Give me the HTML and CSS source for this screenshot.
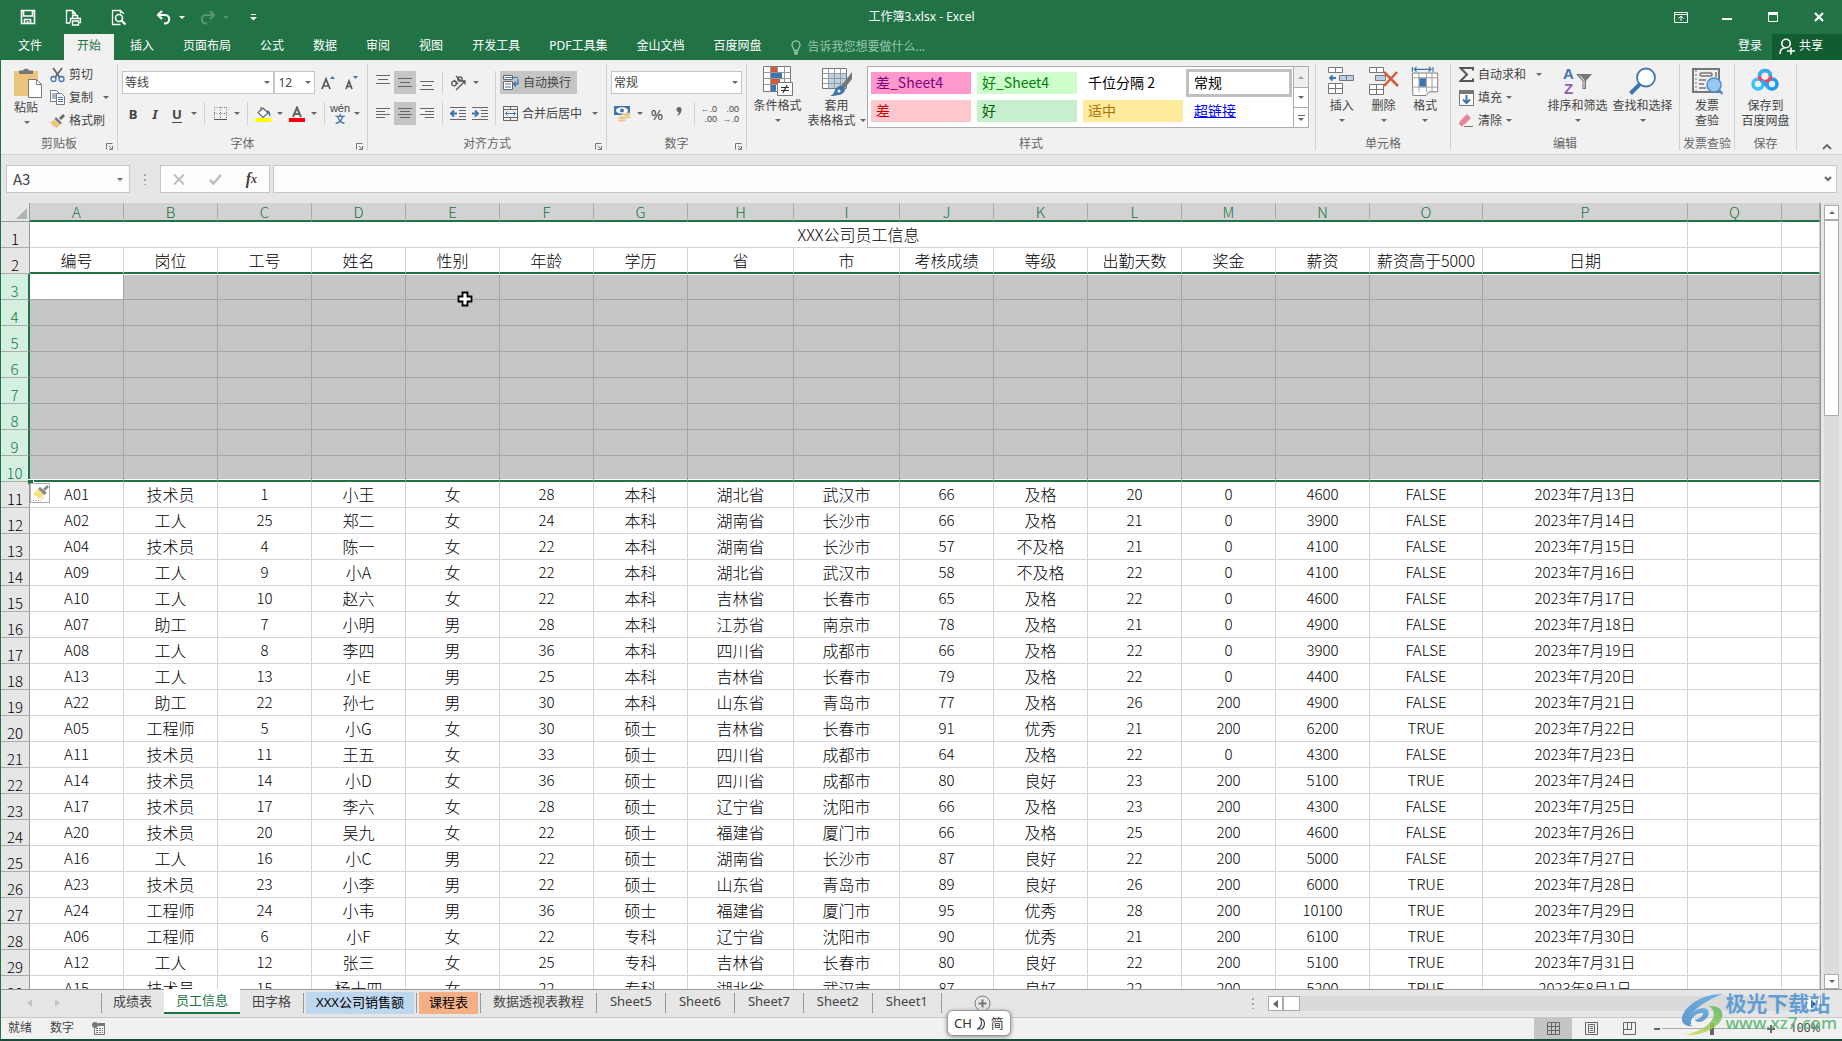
FILE: index.html
```html
<!DOCTYPE html>
<html lang="zh-CN">
<head>
<meta charset="utf-8">
<title>工作簿3.xlsx - Excel</title>
<link rel="stylesheet" href="styles.css">
</head>
<body>
<header class="top">
  <div class="titlebar">
    <div class="quick">
      <button class="q" aria-label="保存"><svg width="16" height="16" viewBox="0 0 16 16"><path d="M1.5 1.5h13v13h-13zM3.500 1.500v5.500h9v-5.500M4.500 14.500v-4h6v4M7.500 12v2.500" fill="none" stroke="#fff" stroke-width="1.600"/></svg></button>
      <button class="q" aria-label="快速打印"><svg width="17" height="17" viewBox="0 0 17 17" fill="none" stroke="#fff" stroke-width="1.300"><path d="M5 14H1.500V1.500h6l3 3V6M7.500 1.500v3h3M7.500 9.500V6.500h5v3M5.500 13.500v-4h10v4h-2M7.500 12h6v4h-6z"/></svg></button>
      <button class="q" aria-label="打印预览"><svg width="16" height="17" viewBox="0 0 16 17" fill="none" stroke="#fff"><path d="M12.500 5v-.5l-3-3h-8v14h8M9.500 1.500v3" stroke-width="1.300"/><circle cx="8" cy="9" r="3.500" stroke-width="1.600"/><path d="M10.500 11.500l4 4" stroke-width="2.200"/></svg></button>
      <button class="q" aria-label="撤消"><svg width="16" height="15" viewBox="0 0 16 15" fill="none" stroke="#fff" stroke-width="2.200"><path d="M6 1L2 5l4 4M2 5h7a4 4 0 0 1 0 8.500H8"/></svg><i class="caret"></i></button>
      <button class="q dim" aria-label="恢复"><svg width="16" height="15" viewBox="0 0 16 15" fill="none" stroke="#fff" stroke-width="2.200"><path d="M10 1l4 4-4 4M14 5H6a4 4 0 0 0 0 8.500h1"/></svg><i class="caret"></i></button>
      <button class="q" aria-label="自定义快速访问工具栏"><svg width="7" height="7" viewBox="0 0 7 7"><path d="M1 .5h5" stroke="#fff"/><path d="M0 3h7L3.500 6.500z" fill="#fff"/></svg></button>
    </div>
    <h1>工作簿3.xlsx - Excel</h1>
    <div class="winbtns">
      <button aria-label="功能区显示选项"><svg width="14" height="11" viewBox="0 0 14 11" fill="none" stroke="#fff"><path d="M.5.5h13v10H.5zM.5 2.500h13M7 9V4.500M4.500 6.500L7 4l2.500 2.500"/></svg></button>
      <button aria-label="最小化"><svg width="10" height="10" viewBox="0 0 10 10"><path d="M0 7h10" stroke="#fff" stroke-width="2"/></svg></button>
      <button aria-label="最大化"><svg width="10" height="10" viewBox="0 0 10 10"><path d="M.5.5h9v9h-9z" fill="none" stroke="#fff"/><path d="M0 1.500h10" stroke="#fff" stroke-width="3"/></svg></button>
      <button aria-label="关闭"><svg width="10" height="10" viewBox="0 0 10 10"><path d="M1 1l8 8M9 1L1 9" stroke="#fff" stroke-width="2.200"/></svg></button>
    </div>
  </div>
  <nav class="tabs">
    <button class="file">文件</button><button class="on">开始</button><button>插入</button><button>页面布局</button><button>公式</button><button>数据</button><button>审阅</button><button>视图</button><button>开发工具</button><button>PDF工具集</button><button>金山文档</button><button>百度网盘</button>
    <button class="tell"><svg width="10" height="15" viewBox="0 0 10 15" fill="none" stroke="#9ac5ac" stroke-width="1.300"><path d="M3 10.500C3 8 1 7.500 1 4.800a4 4 0 0 1 8 0C9 7.500 7 8 7 10.500zM3 12.500h4M3.500 14h3"/></svg>告诉我您想要做什么...</button>
    <span class="grow"></span>
    <button class="login">登录</button>
    <button class="share"><svg width="16" height="17" viewBox="0 0 16 17" fill="none" stroke="#fff" stroke-width="1.600"><circle cx="7" cy="5.500" r="4.200"/><path d="M1 16c0-4 2-6 5-6.300M8 13h8M12 9.500v7"/></svg>共享</button>
  </nav>
</header>

<section class="ribbon">
  <div class="group g-clip">
    <div class="body tight">
      <button class="big paste"><svg width="28" height="30" viewBox="0 0 28 30"><path d="M0 3h24v25H0z" fill="#ecc67d"/><path d="M5 6V2.500h4C9 0 15 0 15 2.500h4V6z" fill="#777"/><path d="M14.500 11.500h8l5 5v13h-13z" fill="#fff" stroke="#777"/><path d="M22.500 11.500v5h5" fill="none" stroke="#777"/></svg><span>粘贴</span><i class="caret"></i></button>
      <div class="stack">
        <button class="sm"><svg width="15" height="16" viewBox="0 0 15 16" fill="none"><path d="M3 1l6.500 9M12 1L5.500 10" stroke="#666" stroke-width="1.800"/><circle cx="3.500" cy="12" r="2.500" stroke="#3e75b0" stroke-width="1.300"/><circle cx="11.500" cy="12" r="2.500" stroke="#3e75b0" stroke-width="1.300"/></svg>剪切</button>
        <button class="sm"><svg width="15" height="15" viewBox="0 0 15 15"><path d="M.5.5h6l2 2v9h-8z" fill="#fff" stroke="#777"/><path d="M2 4h4M2 6h4M2 8h4" stroke="#3e75b0"/><path d="M6.500 3.500h5l3 3v8h-8z" fill="#fff" stroke="#777"/><path d="M8 7.500h5M8 9.500h5M8 11.500h5" stroke="#3e75b0"/></svg>复制<i class="caret far"></i></button>
        <button class="sm"><svg width="15" height="14" viewBox="0 0 15 14"><path d="M9 4l4-4 2 2-4 4z" fill="#666"/><path d="M6 3l6 6-2 1.500L4.500 5z" fill="#777"/><path d="M4 5.500l6 5.500-3 3C4 13 2 11 0 8c2 0 3-1 4-2.500z" fill="#ecc67d"/></svg>格式刷</button>
      </div>
    </div>
    <div class="label">剪贴板<svg class="launch" width="7" height="7" viewBox="0 0 7 7"><path d="M.5 6.500v-6h6M3 3l3 3M6.500 3v3.500H3" fill="none" stroke="#777"/></svg></div>
  </div>

  <div class="group g-font">
    <div class="body rows">
      <div class="row">
        <span class="combo w-font"><select aria-label="字体"><option>等线</option></select></span><span class="combo w-size"><select aria-label="字号"><option>12</option></select></span>
        <button class="ic" aria-label="增大字号"><svg width="14" height="16" viewBox="0 0 14 16"><path d="M1 14L5 4l4 10M2.500 11h5" fill="none" stroke="#555" stroke-width="1.700"/><path d="M9 4l2.500-3L14 4z" fill="#3e75b0"/></svg></button><button class="ic" aria-label="减小字号"><svg width="14" height="16" viewBox="0 0 14 16"><path d="M1 14l3-8 3 8M2.500 11.500h3.500" fill="none" stroke="#555" stroke-width="1.600"/><path d="M8 1h5l-2.500 3z" fill="#3e75b0"/></svg></button>
      </div>
      <div class="row">
        <button class="ic fmt b">B</button><button class="ic fmt i">I</button><button class="ic fmt u">U</button><i class="dd"></i><i class="sep"></i>
        <button class="ic" aria-label="边框"><svg width="13" height="13" viewBox="0 0 13 13" fill="none" stroke="#777"><path d="M.5 0v12M6.500 0v12M12.500 0v12M0 .5h13M0 6.500h13" stroke-dasharray="1 1.500"/><path d="M0 12.500h13" stroke="#555"/></svg></button><i class="dd"></i><i class="sep"></i>
        <button class="ic" aria-label="填充颜色"><svg width="16" height="16" viewBox="0 0 16 16"><path d="M8 2l5 5-5 4.500L3 6.500zM6 5V1" fill="#fff" stroke="#666" stroke-width="1.200"/><path d="M12 4c3 1 4 4 3 7-1-2-1-3-3-4z" fill="#3e75b0"/><path d="M0 12h16v4H0z" fill="#ff0"/></svg></button><i class="dd"></i>
        <button class="ic" aria-label="字体颜色"><svg width="16" height="16" viewBox="0 0 16 16"><path d="M4 11L8 1.500 12 11M5.500 8h5" fill="none" stroke="#666" stroke-width="2"/><path d="M0 12h16v4H0z" fill="red"/></svg></button><i class="dd"></i><i class="sep"></i>
        <button class="ic wen"><span>wén</span><b>文</b></button><i class="dd"></i>
      </div>
    </div>
    <div class="label">字体<svg class="launch" width="7" height="7" viewBox="0 0 7 7"><path d="M.5 6.500v-6h6M3 3l3 3M6.500 3v3.500H3" fill="none" stroke="#777"/></svg></div>
  </div>

  <div class="group g-align">
    <div class="body cols">
      <div class="rows">
        <div class="row">
          <button class="ic" aria-label="顶端对齐"><svg width="14" height="15" viewBox="0 0 14 15" stroke="#666"><path d="M0 .5h14M2 4.500h10M0 8.500h14"/></svg></button><button class="ic on" aria-label="垂直居中"><svg width="14" height="15" viewBox="0 0 14 15" stroke="#666"><path d="M0 3.500h14M2 7.500h10M0 11.500h14"/></svg></button><button class="ic" aria-label="底端对齐"><svg width="14" height="15" viewBox="0 0 14 15" stroke="#666"><path d="M0 6.500h14M2 10.500h10M0 14.500h14"/></svg></button><i class="sep"></i>
          <button class="ic" aria-label="方向"><svg width="17" height="16" viewBox="0 0 17 16" fill="none" stroke="#555" stroke-width="1.300"><circle cx="4" cy="8.500" r="2.300"/><path d="M4 5l4 4M6 1l5 5"/><circle cx="10" cy="4" r="2.200"/><path d="M6 15L15 6M11.500 6H15v3.500"/></svg></button><i class="dd"></i>
        </div>
        <div class="row">
          <button class="ic" aria-label="左对齐"><svg width="14" height="11" viewBox="0 0 14 11" stroke="#666"><path d="M0 .5h14M0 3.500h9M0 6.500h14M0 9.500h9"/></svg></button><button class="ic on" aria-label="居中"><svg width="14" height="11" viewBox="0 0 14 11" stroke="#666"><path d="M0 .5h14M2 3.500h10M0 6.500h14M2 9.500h10"/></svg></button><button class="ic" aria-label="右对齐"><svg width="14" height="11" viewBox="0 0 14 11" stroke="#666"><path d="M0 .5h14M5 3.500h9M0 6.500h14M5 9.500h9"/></svg></button><i class="sep"></i>
          <button class="ic" aria-label="减少缩进"><svg width="16" height="13" viewBox="0 0 16 13"><path d="M0 .5h16M9 3.500h7M9 6.500h7M9 9.500h7M0 12.500h16" stroke="#666"/><path d="M7 6.500H1M4 3.500l-3 3 3 3" fill="none" stroke="#3e75b0" stroke-width="2"/></svg></button><button class="ic" aria-label="增加缩进"><svg width="16" height="13" viewBox="0 0 16 13"><path d="M0 .5h16M9 3.500h7M9 6.500h7M9 9.500h7M0 12.500h16" stroke="#666"/><path d="M0 6.500h6M3 3.500l3 3-3 3" fill="none" stroke="#3e75b0" stroke-width="2"/></svg></button>
        </div>
      </div>
      <i class="sep tall"></i>
      <div class="rows">
        <button class="txt on"><svg width="16" height="15" viewBox="0 0 16 15" fill="none"><path d="M.5.500h9v4h-9zM.5 6.500h9v8h-9z" fill="#fff" stroke="#666"/><path d="M2 2.500h13M2 9h6M2 12h6" stroke="#3e75b0"/><path d="M15 4v5h-4M13 6.500L10.500 9l2.500 2.500" stroke="#3e75b0" stroke-width="1.300"/></svg>自动换行</button>
        <button class="txt"><svg width="15" height="15" viewBox="0 0 15 15" fill="none"><path d="M.5.500h14v14H.5zM.5 3.500h14M.5 11.500h14M7.500.5v3M7.500 11.500v3" stroke="#666"/><path d="M2 7.500h11M4.500 5.500l-2 2 2 2M10.500 5.500l2 2-2 2" stroke="#3e75b0"/></svg>合并后居中<i class="caret"></i></button>
      </div>
    </div>
    <div class="label">对齐方式<svg class="launch" width="7" height="7" viewBox="0 0 7 7"><path d="M.5 6.500v-6h6M3 3l3 3M6.500 3v3.500H3" fill="none" stroke="#777"/></svg></div>
  </div>

  <div class="group g-num">
    <div class="body rows">
      <div class="row"><span class="combo w-num"><select aria-label="数字格式"><option>常规</option></select></span></div>
      <div class="row">
        <button class="ic" aria-label="会计数字格式"><svg width="17" height="16" viewBox="0 0 17 16"><path d="M0 0h16v9H0z" fill="#3e75b0"/><ellipse cx="8" cy="4.500" rx="6" ry="3.200" fill="#fff"/><circle cx="8" cy="4.500" r="2" fill="#3e75b0"/><g fill="#ecc67d" stroke="#f0f0f0" stroke-width=".6"><ellipse cx="12.500" cy="11" rx="4" ry="1.800"/><ellipse cx="12.500" cy="8.500" rx="4" ry="1.800"/><ellipse cx="8" cy="14" rx="4" ry="1.800"/><ellipse cx="8" cy="12" rx="4" ry="1.800"/></g></svg></button><i class="dd"></i>
        <button class="ic pct">%</button><button class="ic comma" aria-label="千位分隔样式"><svg width="6" height="9" viewBox="0 0 6 9"><path d="M3 0a2.500 2.500 0 0 1 2.500 2.700C5.500 5.500 4 8 1 8.800c1.200-1.500 1.700-2.500 1.800-3.800A2.500 2.500 0 1 1 3 0z" fill="#666"/></svg></button><i class="sep"></i>
        <button class="ic dec"><span><b>←</b>.0</span><span>.00</span></button><button class="ic dec"><span>.00</span><span><b>→</b>.0</span></button>
      </div>
    </div>
    <div class="label">数字<svg class="launch" width="7" height="7" viewBox="0 0 7 7"><path d="M.5 6.500v-6h6M3 3l3 3M6.500 3v3.500H3" fill="none" stroke="#777"/></svg></div>
  </div>

  <div class="group g-style">
    <div class="body">
      <button class="big w-style"><svg width="30" height="30" viewBox="0 0 30 30"><path d="M.5.500h27v25H.5z" fill="#fff" stroke="#777"/><path d="M.5 6.500h27M.5 12.500h27M.5 18.500h27M7.500.5v25M14.500.5v25M21.500.5v25" stroke="#999"/><path d="M8 1h6v5H8zM8 13h9v5H8z" fill="#d6593a"/><path d="M8 7h11v5H8zM8 19h5v6H8z" fill="#3e75b0"/><path d="M14.500 16.500h15v13h-15z" fill="#fff" stroke="#777"/><path d="M18 21.500h8M18 24.500h8M24 19l-4 8" stroke="#333" stroke-width="1.200"/></svg><span>条件格式</span><i class="caret"></i></button>
      <button class="big w-style"><svg width="30" height="30" viewBox="0 0 30 30"><path d="M.5 2.500h24v20H.5z" fill="#fff" stroke="#777"/><path d="M7 8h17v14H7z" fill="#bcd0e6"/><path d="M.5 7.500h24M.5 12.500h24M.5 17.500h24M6.500 2.500v20M12.500 2.500v20M18.500 2.500v20" stroke="#999"/><path d="M30 6L19 20l3 3 8-10z" fill="#777"/><path d="M20 20l3 3c0 5-6 7-15 7 3-1 4-3 5-6 1-3 5-5 7-4z" fill="#3e75b0"/><circle cx="17" cy="25" r="1.500" fill="#fff"/></svg><span>套用</span><span class="two">表格格式<i class="caret"></i></span></button>
      <div class="gallery">
        <div class="swatches">
          <button class="s1">差_Sheet4</button><button class="s2">好_Sheet4</button><button>千位分隔 2</button><button class="s4">常规</button>
          <button class="s5">差</button><button class="s6">好</button><button class="s7">适中</button><button class="s8">超链接</button>
        </div>
        <div class="galbtns"><button class="off" aria-label="上一行"><i class="caret up"></i></button><button aria-label="下一行"><i class="caret"></i></button><button class="more" aria-label="其他"><i class="caret"></i></button></div>
      </div>
    </div>
    <div class="label">样式</div>
  </div>

  <div class="group g-cell">
    <div class="body">
      <button class="big w-cell"><svg width="27" height="30" viewBox="0 0 27 30"><path d="M.5 1.500h14v5H.5zM7.500 1.500v5M.5 17.500h14v10H.5zM.5 22.500h14M7.500 17.500v10" fill="#fff" stroke="#777"/><path d="M11.500 9.500h14v5h-14zM18.500 9.500v5" fill="#bcd0e6" stroke="#777"/><path d="M8 12H2M4.500 9.500L2 12l2.500 2.500" fill="none" stroke="#3e75b0" stroke-width="1.800"/></svg><span>插入</span><i class="caret"></i></button>
      <button class="big w-cell"><svg width="30" height="30" viewBox="0 0 30 30"><path d="M.5 1.500h14v5H.5zM7.500 1.500v5M.5 18.500h14v10H.5zM.5 23.500h14M7.500 18.500v10" fill="#fff" stroke="#777"/><path d="M6.500 9.500h10v5h-10z" fill="#bcd0e6" stroke="#777"/><path d="M15 6l14 14M28 6L15 20" stroke="#d6593a" stroke-width="2.500"/></svg><span>删除</span><i class="caret"></i></button>
      <button class="big w-cell"><svg width="28" height="32" viewBox="0 0 28 32"><path d="M.5 1v5M22.500 1v5M2 3.500h19M5 1L2.500 3.500 5 6M18 1l2.500 2.500L18 6" fill="none" stroke="#3e75b0" stroke-width="1.300"/><path d="M.5 7.500h27v20H18l-3 4H1z" fill="#fff" stroke="#777"/><path d="M.5 12.500h27M.5 22.500h27M7.500 7.500v20M15.500 7.500v20M21.500 7.500v20" stroke="#999"/><path d="M8 13h7v9H8z" fill="#3e75b0"/></svg><span>格式</span><i class="caret"></i></button>
    </div>
    <div class="label">单元格</div>
  </div>

  <div class="group g-edit">
    <div class="body tight">
      <div class="stack">
        <button class="sm"><svg width="15" height="15" viewBox="0 0 15 15"><path d="M14 3.500V1H1.500L8 7.500 1.500 14H14v-2.500" fill="none" stroke="#555" stroke-width="2"/></svg>自动求和<i class="caret far"></i></button>
        <button class="sm"><svg width="15" height="16" viewBox="0 0 15 16"><path d="M.5.500h14v15H.5z" fill="#fff" stroke="#777"/><path d="M0 0h15v4H0z" fill="#777"/><path d="M7.500 5v8M4 9.500l3.500 3.500L11 9.500" fill="none" stroke="#3e75b0" stroke-width="2"/></svg>填充<i class="caret"></i></button>
        <button class="sm"><svg width="15" height="14" viewBox="0 0 15 14"><path d="M8 0l4 4-7 7-4-4z" fill="#e8849a"/><path d="M1 7.500l3.500 3.500L3 12.500 0 9.500z" fill="#d96a80"/><path d="M5 12.500h9" stroke="#777"/></svg>清除<i class="caret"></i></button>
      </div>
      <button class="big w-edit"><span class="az"><b>A</b><b>Z</b><svg width="18" height="17" viewBox="0 0 18 17"><path d="M1 1h16l-6 7v8H7.500V8z" fill="#777"/><path d="M5 2.500l4 5V15" fill="none" stroke="#f0f0f0"/></svg></span><span>排序和筛选</span><i class="caret"></i></button>
      <button class="big w-edit"><svg width="28" height="28" viewBox="0 0 28 28"><path d="M1.500 26.500L11 17" stroke="#3e75b0" stroke-width="4"/><circle cx="17" cy="10.500" r="9" fill="#fff" stroke="#3e75b0" stroke-width="1.800"/></svg><span>查找和选择</span><i class="caret"></i></button>
    </div>
    <div class="label">编辑</div>
  </div>

  <div class="group g-inv">
    <div class="body">
      <button class="big"><svg width="31" height="28" viewBox="0 0 31 28"><path d="M1 2h26v23H1z" fill="#eee" stroke="#777" stroke-width="2"/><path d="M4 3v21" stroke="#777" stroke-dasharray="2 2"/><rect x="8" y="6" width="12" height="3" rx="1.500" fill="none" stroke="#777" stroke-width="1.500"/><path d="M7 13h7M7 17h5M7 21h7M24 5v5" stroke="#777" stroke-width="1.500"/><circle cx="22" cy="18" r="7" fill="#99c8f2" stroke="#4a8fd0" stroke-width="1.500"/><path d="M27 23l3.500 4" stroke="#4a8fd0" stroke-width="2.500"/></svg><span>发票</span><span>查验</span></button>
    </div>
    <div class="label">发票查验</div>
  </div>
  <div class="group g-save">
    <div class="body">
      <button class="big"><svg width="28" height="28" viewBox="0 0 28 28" fill="none" stroke-width="3.500"><circle cx="7" cy="17" r="5" stroke="#3cc0f5"/><circle cx="21" cy="17" r="5" stroke="#1e9bf5"/><circle cx="14" cy="9" r="5.500" stroke="#ee4a68"/><path d="M8.500 9a5.500 5.500 0 0 1 11 0" stroke="#2bb4f4"/><path d="M10.500 13.500L17.500 20.500" stroke="#2ba9f2"/></svg><span>保存到</span><span>百度网盘</span></button>
    </div>
    <div class="label">保存</div>
  </div>
  <button class="collapse" aria-label="折叠功能区"><svg width="10" height="7" viewBox="0 0 10 7"><path d="M1 6l4-4 4 4" fill="none" stroke="#666" stroke-width="1.800"/></svg></button>
</section>

<section class="fbar">
  <div class="namebox"><input aria-label="名称框" value="A3"><i class="caret"></i></div>
  <i class="dots"></i>
  <div class="fbtns">
    <button aria-label="取消"><svg width="12" height="11" viewBox="0 0 12 11"><path d="M1 .5l10 10M11 .5l-10 10" stroke="#bbb" stroke-width="1.800"/></svg></button>
    <button aria-label="输入"><svg width="13" height="11" viewBox="0 0 13 11"><path d="M1 6l3.500 3.500L12 1" fill="none" stroke="#bbb" stroke-width="2.500"/></svg></button>
    <button class="fx">f<small>x</small></button>
  </div>
  <div class="formula"><input aria-label="编辑栏"><svg width="8" height="6" viewBox="0 0 8 6"><path d="M1 1l3 3 3-3" fill="none" stroke="#666" stroke-width="2"/></svg></div>
</section>

<main class="sheet">
  <div class="view">
    <table class="grid">
      <colgroup><col class="c-head"><col class="c"><col class="c"><col class="c"><col class="c"><col class="c"><col class="c"><col class="c"><col class="c-hi"><col class="c-hi"><col class="c"><col class="c"><col class="c"><col class="c"><col class="c"><col class="c-o"><col class="c-p"><col class="c"><col></colgroup>
      <thead><tr><th class="corner"><svg width="11" height="11" viewBox="0 0 11 11"><path d="M11 0v11H0z" fill="#b4b4b4"/></svg><th>A<th>B<th>C<th>D<th>E<th>F<th>G<th>H<th>I<th>J<th>K<th>L<th>M<th>N<th>O<th>P<th>Q<th></tr></thead>
      <tbody>
      <tr class="head"><th>1<td colspan="16">XXX公司员工信息<td><td></tr>
      <tr class="head last"><th>2<td>编号<td>岗位<td>工号<td>姓名<td>性别<td>年龄<td>学历<td>省<td>市<td>考核成绩<td>等级<td>出勤天数<td>奖金<td>薪资<td>薪资高于5000<td>日期<td><td></tr>
      <tr class="sel first"><th>3<td class="active"><td><td><td><td><td> <td><td><td><td><td><td> <td><td><td><td><td><td></tr>
      <tr class="sel"><th>4<td><td><td><td><td><td> <td><td><td><td><td><td> <td><td><td><td><td><td></tr>
      <tr class="sel"><th>5<td><td><td><td><td><td> <td><td><td><td><td><td> <td><td><td><td><td><td></tr>
      <tr class="sel"><th>6<td><td><td><td><td><td> <td><td><td><td><td><td> <td><td><td><td><td><td></tr>
      <tr class="sel"><th>7<td><td><td><td><td><td> <td><td><td><td><td><td> <td><td><td><td><td><td></tr>
      <tr class="sel"><th>8<td><td><td><td><td><td> <td><td><td><td><td><td> <td><td><td><td><td><td></tr>
      <tr class="sel"><th>9<td><td><td><td><td><td> <td><td><td><td><td><td> <td><td><td><td><td><td></tr>
      <tr class="sel end"><th>10<td><td><td><td><td><td> <td><td><td><td><td><td> <td><td><td><td><td><td></tr>
      <tr><th>11<td>A01<td>技术员<td>1<td>小王<td>女<td>28<td>本科<td>湖北省<td>武汉市<td>66<td>及格<td>20<td>0<td>4600<td>FALSE<td>2023年7月13日<td><td></tr>
      <tr><th>12<td>A02<td>工人<td>25<td>郑二<td>女<td>24<td>本科<td>湖南省<td>长沙市<td>66<td>及格<td>21<td>0<td>3900<td>FALSE<td>2023年7月14日<td><td></tr>
      <tr><th>13<td>A04<td>技术员<td>4<td>陈一<td>女<td>22<td>本科<td>湖南省<td>长沙市<td>57<td>不及格<td>21<td>0<td>4100<td>FALSE<td>2023年7月15日<td><td></tr>
      <tr><th>14<td>A09<td>工人<td>9<td>小A<td>女<td>22<td>本科<td>湖北省<td>武汉市<td>58<td>不及格<td>22<td>0<td>4100<td>FALSE<td>2023年7月16日<td><td></tr>
      <tr><th>15<td>A10<td>工人<td>10<td>赵六<td>女<td>22<td>本科<td>吉林省<td>长春市<td>65<td>及格<td>22<td>0<td>4600<td>FALSE<td>2023年7月17日<td><td></tr>
      <tr><th>16<td>A07<td>助工<td>7<td>小明<td>男<td>28<td>本科<td>江苏省<td>南京市<td>78<td>及格<td>21<td>0<td>4900<td>FALSE<td>2023年7月18日<td><td></tr>
      <tr><th>17<td>A08<td>工人<td>8<td>李四<td>男<td>36<td>本科<td>四川省<td>成都市<td>66<td>及格<td>22<td>0<td>3900<td>FALSE<td>2023年7月19日<td><td></tr>
      <tr><th>18<td>A13<td>工人<td>13<td>小E<td>男<td>25<td>本科<td>吉林省<td>长春市<td>79<td>及格<td>22<td>0<td>4400<td>FALSE<td>2023年7月20日<td><td></tr>
      <tr><th>19<td>A22<td>助工<td>22<td>孙七<td>男<td>30<td>本科<td>山东省<td>青岛市<td>77<td>及格<td>26<td>200<td>4900<td>FALSE<td>2023年7月21日<td><td></tr>
      <tr><th>20<td>A05<td>工程师<td>5<td>小G<td>女<td>30<td>硕士<td>吉林省<td>长春市<td>91<td>优秀<td>21<td>200<td>6200<td>TRUE<td>2023年7月22日<td><td></tr>
      <tr><th>21<td>A11<td>技术员<td>11<td>王五<td>女<td>33<td>硕士<td>四川省<td>成都市<td>64<td>及格<td>22<td>0<td>4300<td>FALSE<td>2023年7月23日<td><td></tr>
      <tr><th>22<td>A14<td>技术员<td>14<td>小D<td>女<td>36<td>硕士<td>四川省<td>成都市<td>80<td>良好<td>23<td>200<td>5100<td>TRUE<td>2023年7月24日<td><td></tr>
      <tr><th>23<td>A17<td>技术员<td>17<td>李六<td>女<td>28<td>硕士<td>辽宁省<td>沈阳市<td>66<td>及格<td>23<td>200<td>4300<td>FALSE<td>2023年7月25日<td><td></tr>
      <tr><th>24<td>A20<td>技术员<td>20<td>吴九<td>女<td>22<td>硕士<td>福建省<td>厦门市<td>66<td>及格<td>25<td>200<td>4600<td>FALSE<td>2023年7月26日<td><td></tr>
      <tr><th>25<td>A16<td>工人<td>16<td>小C<td>男<td>22<td>硕士<td>湖南省<td>长沙市<td>87<td>良好<td>22<td>200<td>5000<td>FALSE<td>2023年7月27日<td><td></tr>
      <tr><th>26<td>A23<td>技术员<td>23<td>小李<td>男<td>22<td>硕士<td>山东省<td>青岛市<td>89<td>良好<td>26<td>200<td>6000<td>TRUE<td>2023年7月28日<td><td></tr>
      <tr><th>27<td>A24<td>工程师<td>24<td>小韦<td>男<td>36<td>硕士<td>福建省<td>厦门市<td>95<td>优秀<td>28<td>200<td>10100<td>TRUE<td>2023年7月29日<td><td></tr>
      <tr><th>28<td>A06<td>工程师<td>6<td>小F<td>女<td>22<td>专科<td>辽宁省<td>沈阳市<td>90<td>优秀<td>21<td>200<td>6100<td>TRUE<td>2023年7月30日<td><td></tr>
      <tr><th>29<td>A12<td>工人<td>12<td>张三<td>女<td>25<td>专科<td>吉林省<td>长春市<td>80<td>良好<td>22<td>200<td>5100<td>TRUE<td>2023年7月31日<td><td></tr>
      <tr><th>30<td>A15<td>技术员<td>15<td>杨十四<td>女<td>22<td>专科<td>湖北省<td>武汉市<td>87<td>良好<td>22<td>200<td>5200<td>TRUE<td>2023年8月1日<td><td></tr>
      </tbody>
    </table>
    <i class="handle"></i>
    <button class="pasteopt" aria-label="格式选项"><svg width="17" height="16" viewBox="0 0 17 16"><path d="M11 4l4-4 2 2-4 4z" fill="#888"/><path d="M8 2l7 6-3 2-6-6z" fill="#888"/><path d="M6 4l6 6-4 4-7-5c2-1 3-3 5-5z" fill="#f4e27a"/><path d="M1 15.500h8l3-4" fill="none" stroke="#888" stroke-dasharray="1 1.500"/></svg></button>
    <svg class="cursor" width="16" height="16" viewBox="0 0 16 16"><path d="M5.500 1.500h5v4h4v5h-4v4h-5v-4h-4v-5h4z" fill="#fff" stroke="#000" stroke-width="1.800"/></svg>
  </div>
  <div class="vscroll"><button aria-label="向上"><i class="caret up"></i></button><div class="vthumb"></div><span class="grow"></span><button aria-label="向下"><i class="caret"></i></button></div>
</main>

<section class="sheettabs">
  <div class="nav"><button aria-label="上一个"><svg width="5" height="8" viewBox="0 0 5 8"><path d="M5 0v8L0 4z" fill="#c3c3c3"/></svg></button><button aria-label="下一个"><svg width="5" height="8" viewBox="0 0 5 8"><path d="M0 0v8l5-4z" fill="#c3c3c3"/></svg></button></div>
  <button class="tab nob">成绩表</button><button class="tab nob cur">员工信息</button><button class="tab">田字格</button><span class="cell"><button class="tab blue">XXX公司销售额</button></span><span class="cell"><button class="tab orange">课程表</button></span><button class="tab">数据透视表教程</button><button class="tab wide">Sheet5</button><button class="tab wide">Sheet6</button><button class="tab wide">Sheet7</button><button class="tab wide">Sheet2</button><button class="tab wide">Sheet1</button>
  <button class="add" aria-label="新工作表"><svg width="17" height="17" viewBox="0 0 17 17" fill="none" stroke="#777"><circle cx="8.500" cy="8.500" r="7.500"/><path d="M4.500 8.500h8M8.500 4.500v8" stroke-width="2"/></svg></button>
  <span class="grow"></span>
  <i class="dots"></i>
  <div class="hscroll"><button aria-label="向左"><svg width="5" height="8" viewBox="0 0 5 8"><path d="M5 0v8L0 4z" fill="#666"/></svg></button><div class="hthumb"></div><span class="grow"></span><button aria-label="向右"><svg width="5" height="8" viewBox="0 0 5 8"><path d="M0 0v8l5-4z" fill="#345"/></svg></button></div>
</section>

<footer class="status">
  <span>就绪</span><span>数字</span>
  <svg width="13" height="13" viewBox="0 0 13 13"><path d="M2.500 4.500v8h10v-10h-5" fill="none" stroke="#777"/><path d="M6 1h7v3H6z" fill="#777"/><circle cx="3" cy="3" r="3" fill="#777"/><path d="M4 6.500h7M4 8.500h7M4 10.500h7" stroke="#777" stroke-dasharray="2 1"/></svg>
  <span class="grow"></span>
  <div class="views">
    <button class="on" aria-label="普通"><svg width="13" height="13" viewBox="0 0 13 13" fill="none" stroke="#666"><path d="M.5.500h12v12H.5zM4.500.5v12M8.500.5v12M.5 4.500h12M.5 8.500h12"/></svg></button>
    <button aria-label="页面布局"><svg width="13" height="13" viewBox="0 0 13 13" fill="none" stroke="#666"><path d="M.5.500h12v12H.5zM3.500 2.500h6v8h-6zM5 4.500h3M5 6.500h3M5 8.500h3"/></svg></button>
    <button aria-label="分页预览"><svg width="13" height="13" viewBox="0 0 13 13" fill="none" stroke="#666"><path d="M.5.500h12v12H.5zM4.500.5v7M8.500.5v7M0 7.500h9"/></svg></button>
  </div>
  <button class="zb" aria-label="缩小"><svg width="8" height="8" viewBox="0 0 8 8"><path d="M1 4h6" stroke="#666" stroke-width="2"/></svg></button><input class="zoom" type="range" min="0" max="100" value="48" aria-label="缩放"><button class="zb" aria-label="放大"><svg width="8" height="8" viewBox="0 0 8 8"><path d="M0 4h8M4 0v8" stroke="#666" stroke-width="2"/></svg></button><span class="pc">100%</span>
</footer>

<div class="ime">CH <svg width="11" height="13" viewBox="0 0 11 13"><path d="M4 1c5 2 6 7 2 11H1c4-1 6-6 3-11z" fill="none" stroke="#444" stroke-width="1.200"/></svg> 简</div>
<div class="mark">
  <svg width="44" height="48" viewBox="0 0 44 48"><defs><linearGradient id="swirl" x1="0" y1="0" x2="0" y2="1"><stop offset="0" stop-color="#58a9e0"/><stop offset="1" stop-color="#4a86c8"/></linearGradient><linearGradient id="leaf" x1="1" y1="0" x2="0" y2="1"><stop offset="0" stop-color="#4fb56a"/><stop offset="1" stop-color="#e3e04a"/></linearGradient></defs><path d="M42 5C24 4 3 16 1 29c-1 6 5 9 11 8-6-2-5-9 1-15C20 15 31 9 42 5z" fill="url(#swirl)"/><path d="M6 35c-1-9 9-16 17-16 6 1 7 8-1 13-4 2-8 1-8-2 3 1 8-2 8-6-6-1-13 5-12 11z" fill="url(#swirl)"/><path d="M27 17c17-1 18 12 8 20-8 6-19 10-31 9 14-3 25-10 28-17 2-6 0-10-5-12z" fill="url(#leaf)"/></svg>
  <div><b>极光下载站</b><span>www.xz7.com</span></div>
</div>
</body>
</html>
```
FILE: styles.css
```css
* { box-sizing: border-box; }
html, body { height: 100%; margin: 0; }
body {
  display: flex; flex-direction: column; overflow: hidden; position: relative;
  font: 12px/16px "Noto Sans", "Noto Sans CJK SC", sans-serif;
  color: #444; background: #e6e6e6;
  border-left: 1px solid #217346; border-bottom: 2px solid #1c4a3a;
}
button, input, select { font: inherit; color: inherit; background: none; border: 0; padding: 0; margin: 0; border-radius: 0; outline: 0; }
button { display: flex; align-items: center; justify-content: center; white-space: nowrap; }
svg { display: block; flex: none; }
.grow { flex: 1; }
.caret { display: block; flex: none; width: 0; height: 0; border: 3px solid transparent; border-top-color: #666; border-bottom: 0; }
.caret.up { border-top: 0; border-bottom: 3px solid #666; }

/* Title bar and ribbon tabs */
.top { flex: none; background: #217346; color: #fff; }
.titlebar { display: grid; grid-template-columns: 1fr auto 1fr; height: 34px; align-items: center; }
.titlebar h1 { margin: 0; font-size: 12px; font-weight: 400; }
.quick { display: flex; align-items: center; padding-left: 19px; gap: 29px; }
.q { gap: 7px; }
.q .caret { border-top-color: #fff; }
.q.dim { opacity: .25; }
.q:nth-child(5) { margin-left: -14px; }
.q:nth-child(6) { margin-left: -8px; }
.winbtns { display: flex; justify-content: flex-end; }
.winbtns button { width: 46px; height: 34px; }
.tabs { display: flex; height: 26px; padding-left: 3px; gap: 3px; }
.tabs button { padding: 0 13px 2px; }
.tabs .file { margin-right: 5px; padding: 0 14px 2px; }
.tabs .on { background: #f1f1f1; color: #217346; }
.tabs .tell { color: #9ac5ac; gap: 6px; padding: 0 14px 0; }
.tabs .login { padding: 0 7px 2px; }
.tabs .share { background: #115c30; padding: 0 19px 2px 7px; gap: 4px; }

/* Ribbon */
.ribbon { flex: none; display: flex; height: 95px; background: #f1f1f1; border-bottom: 1px solid #d2d2d2; position: relative; padding-top: 4px; }
.group { display: flex; flex-direction: column; height: 86px; border-right: 1px solid #d2d2d2; flex: none; }
.body { display: flex; height: 72px; padding: 7px 4px 0; }
.body.tight { padding-top: 0; }
.label { position: relative; height: 14px; line-height: 16px; text-align: center; color: #666; }
.launch { position: absolute; right: 4px; bottom: 0; }
.g-clip { width: 117px; }
.g-font { width: 250px; }
.g-align { width: 239px; }
.g-num { width: 140px; }
.g-style { width: 569px; }
.g-cell { width: 135px; }
.g-edit { width: 229px; }
.g-inv { width: 55px; }
.g-save { width: 62px; }
.g-inv .body, .g-save .body { justify-content: center; }
.big { flex-direction: column; justify-content: flex-start; height: 66px; line-height: 15px; }
.big svg { height: 30px; margin-bottom: 2px; }
.big > .caret { margin-top: 6px; }
.g-style .body, .g-cell .body, .g-inv .body, .g-save .body { padding-top: 2px; }
.two { display: flex; align-items: center; gap: 4px; }
.paste { margin: 4px 0 0 9px; }
.paste span { margin-left: -4px; }
.paste .caret { margin-left: -3px; }
.stack { display: flex; flex-direction: column; padding-left: 8px; flex: 1; align-items: flex-start; }
.sm { height: 23px; gap: 4px; padding-bottom: 2px; }
.sm .far { margin-left: 6px; }
.rows { display: flex; flex-direction: column; gap: 8px; }
.body.rows { padding-top: 7px; }
.row { display: flex; height: 23px; align-items: center; }
.ic { width: 22px; height: 23px; flex: none; }
.on { background: #c5c5c5; }
.sep { width: 1px; height: 23px; margin: 0 4px; background: #d2d2d2; flex: none; }
.g-font .sep { margin: 0 4px; }
.sep.tall { height: 54px; }
.dd { width: 13px; height: 23px; display: flex; align-items: center; justify-content: center; flex: none; }
.g-font .dd { width: 12px; }
.dd::after, .combo::after { content: ""; border: 3px solid transparent; border-top-color: #666; border-bottom: 0; }
.combo { position: relative; display: flex; height: 23px; }
.combo::after { position: absolute; right: 4px; top: 10px; }
.combo select { appearance: none; width: 100%; background: #fff; border: 1px solid #c6c6c6; padding-left: 2px; }
.w-font { width: 158px; }
.w-size { width: 42px; margin-left: -2px; }
.w-size select { padding-left: 3px; }
.w-num { width: 131px; }
.fmt { font-size: 13px; font-weight: 700; }
.i { font-style: italic; }
.u { text-decoration: underline; text-underline-offset: 3px; }
.wen { flex-direction: column; line-height: 12px; font-family: "Liberation Sans", "Noto Sans CJK SC", sans-serif; font-size: 11px; }
.wen b { color: #3e75b0; font-size: 10px; }
.txt { height: 23px; padding: 0 6px 0 3px; gap: 4px; justify-content: flex-start; align-self: flex-start; }
.txt .caret { margin-left: 6px; }
.g-font .row:first-child { gap: 2px; }
.pct { font-size: 15px; }
.comma { padding-bottom: 4px; }
.dec { flex-direction: column; align-items: flex-end; font-family: "Liberation Sans", sans-serif; font-size: 9px; line-height: 10px; padding-right: 4px; }
.dec b { color: #3e75b0; }

.g-style .body { padding-left: 2px; }
.w-style { width: 59px; padding-right: 2px; }
.gallery { display: flex; height: 62px; width: 442px; background: #fff; border: 1px solid #ababab; }
.swatches { display: grid; grid-template-columns: repeat(4, 100px); grid-template-rows: 22px 22px; gap: 6px; padding: 5px 0 0 3px; width: 426px; }
.swatches button { justify-content: flex-start; padding: 0 0 2px 5px; font-family: "Noto Sans CJK SC", sans-serif; font-size: 14px; color: #000; }
.swatches .s1 { background: #ff99cc; color: #800080; }
.swatches .s2 { background: #ccffcc; color: #008000; }
.swatches .s4 { outline: 3px solid #c0c0c0; }
.swatches .s5 { background: #ffc7ce; color: #c00000; }
.swatches .s6 { background: #c6efce; color: #006100; }
.swatches .s7 { background: #ffeb9c; color: #b07000; }
.swatches .s8 { color: #00f; text-decoration: underline; }
.galbtns { display: grid; grid-template-rows: 1fr 1fr 1fr; width: 15px; border-left: 1px solid #ababab; }
.galbtns button + button { border-top: 1px solid #ababab; }
.galbtns .off { background: #e6e6e6; opacity: .6; }
.more { flex-direction: column; gap: 2px; }
.more::before { content: ""; width: 7px; height: 1px; background: #666; }
.w-cell { width: 42px; }
.g-cell .body { padding-left: 5px; }
.w-edit { width: 65px; margin-top: 2px; }
.g-edit .stack { padding-left: 4px; }
.az { display: grid; grid-template-columns: 12px 18px; grid-template-rows: 15px 15px; align-items: center; margin-bottom: 2px; font: 700 15px/15px "Liberation Sans", sans-serif; color: #3e75b0; }
.az svg { grid-column: 2; grid-row: 1 / 3; height: 17px; margin: 0; }
.az b { grid-column: 1; }
.az b + b { color: #8f5bb5; }
.collapse { position: absolute; right: 10px; bottom: 4px; }

/* Formula bar */
.fbar { flex: none; display: flex; height: 48px; padding: 10px 5px; align-items: stretch; }
.namebox, .fbtns, .formula { display: flex; align-items: center; background: #fdfdfd; border: 1px solid #c6c6c6; }
.namebox { width: 124px; padding: 0 6px; font: 15px/20px "Noto Sans CJK SC", sans-serif; }
.namebox input { width: 104px; height: 22px; padding-bottom: 2px; }
.dots { width: 2px; height: 11px; margin: auto 14px; background: repeating-linear-gradient(#aaa 0 2px, transparent 2px 5px); }
.fbtns { width: 110px; justify-content: space-around; }
.fx { font: italic 700 16px/20px "Liberation Serif", serif; }
.fx small { font-size: 12px; }
.formula { flex: 1; margin-left: 3px; padding-right: 4px; }
.formula input { flex: 1; }

/* Worksheet */
.sheet { flex: 1; min-height: 0; display: flex; }
.view { flex: 1; min-width: 0; overflow: hidden; position: relative; border-right: 1px solid #999; }
.grid { width: 100%; table-layout: fixed; border-spacing: 0; font-family: "Noto Sans CJK SC", sans-serif; font-weight: 300; font-size: 16px; color: #000; text-align: center; }
.c-head { width: 29px; }
.c { width: 94px; }
.c-hi { width: 106px; }
.c-o { width: 113px; }
.c-p { width: 205px; }
.grid th, .grid td { padding: 0; font-weight: 300; white-space: nowrap; }
.grid thead th { height: 19px; line-height: 17px; background: #d2d2d2; color: #217346; font-size: 15px; border-right: 1px solid #ababab; border-bottom: 2px solid #217346; }
.grid thead .corner { background: #e6e6e6; border-right-color: #999; border-bottom: 1px solid #999; }
.corner svg { margin: 2px 0 0 15px; }
.grid tbody th { height: 26px; line-height: 16px; vertical-align: bottom; font-size: 15px; background: #e6e6e6; border-right: 1px solid #999; border-bottom: 1px solid #ababab; }
.grid td { height: 26px; padding-bottom: 1px; line-height: 22px; background: #fff; border-right: 1px solid #d4d4d4; border-bottom: 1px solid #d4d4d4; }
.grid tr:not(.head) td:is(:nth-child(2), :nth-child(4), :nth-child(7), :nth-child(11), :nth-child(n+13)) { font-size: 15px; }
.grid .last td { border-bottom: 2px solid #217346; }
.grid .sel td { background: #c6c6c6; border-color: #a6a6a6; }
.grid .sel td.active { background: #fff; }
.grid .sel th { background: #d3f0e0; color: #217346; border-right: 2px solid #217346; }
.grid .first td { border-top: 1px solid #fff; }
.grid .end td { border-bottom: 2px solid #217346; box-shadow: inset 0 -1px #fff; }
.handle { position: absolute; left: 27px; top: 276px; width: 6px; height: 5px; background: #217346; border: solid #fff; border-width: 1px 1px 0 0; }
.pasteopt { position: absolute; left: 29px; top: 280px; width: 20px; height: 20px; background: #fff; border: 1px solid #ababab; }
.cursor { position: absolute; left: 456px; top: 88px; }
.vscroll { width: 21px; padding-top: 2px; display: flex; flex-direction: column; background: #dcdcdc; border: solid #e6e6e6; border-width: 0 3px; }
.vscroll button { height: 15px; background: #fff; border: 1px solid #ababab; }
.vthumb { height: 25%; background: #fff; border: 1px solid #ababab; }

/* Sheet tabs */
.sheettabs { flex: none; display: flex; align-items: flex-start; height: 28px; border-top: 1px solid #999; font-size: 13px; }
.nav { display: flex; width: 101px; height: 20px; margin-top: 3px; padding-left: 26px; gap: 23px; border-right: 1px solid #999; }
.tab { height: 20px; margin-top: 3px; padding: 0 12px 4px; border-right: 1px solid #999; }
.tab.wide { padding: 0 13px 4px; }
.tab.nob { border: 0; padding: 0 12px 4px 11px; }
.tab.cur { height: 25px; margin-top: -1px; padding: 2px 12px 4px; background: #fff; color: #217346; border-bottom: 2px solid #217346; }
.cell { display: flex; height: 20px; margin-top: 3px; padding: 0 2px; border-right: 1px solid #999; }
.cell .tab { height: 22px; margin: -1px 0 0; padding: 0 10px 3px; border: 0; color: #000; }
.tab.blue { background: #bdd7ee; }
.tab.orange { background: #f4b084; }
.add { margin: 5px 0 0 32px; }
.sheettabs .dots { margin: 8px 14px; }
.hscroll { display: flex; width: 553px; height: 15px; margin: 6px 21px 0 0; background: #dadada; }
.hscroll button { width: 15px; background: #fff; border: 1px solid #ababab; }
.hthumb { width: 17px; background: #fff; border: 1px solid #ababab; }

/* Status bar */
.status { flex: none; display: flex; align-items: center; height: 22px; padding: 0 20px 0 7px; background: #f1f1f1; border-top: 1px solid #c6c6c6; line-height: 14px; }
.status > span { padding-bottom: 2px; }
.status > span + span { margin-left: 18px; }
.status > svg { margin-left: 18px; }
.views { display: flex; align-self: stretch; }
.views button { width: 38px; }
.zb { width: 10px; margin-left: 4px; }
.zoom { appearance: none; width: 104px; height: 14px; background: linear-gradient(#aaa, #aaa) center / 100% 1px no-repeat; }
.zoom + .zb { margin-left: 0; }
.zoom::-webkit-slider-thumb { appearance: none; width: 4px; height: 12px; background: #666; }
.status .pc { margin-left: 14px; width: 32px; }

/* Floating over the window */
.ime { position: absolute; left: 946px; bottom: 3px; display: flex; align-items: center; gap: 4px; height: 26px; padding: 0 6px; border: 1px solid #999; border-radius: 6px; background: #fff; font-size: 13px; color: #333; box-shadow: 0 1px 4px #888; }
.mark { position: absolute; right: 5px; bottom: 2px; display: flex; opacity: .85; }
.mark div { display: flex; flex-direction: column; padding-top: 3px; }
.mark b { font-size: 21px; line-height: 22px; color: #4a93d4; }
.mark span { font-size: 17px; line-height: 18px; color: #4fb56a; font-weight: 500; }
```
